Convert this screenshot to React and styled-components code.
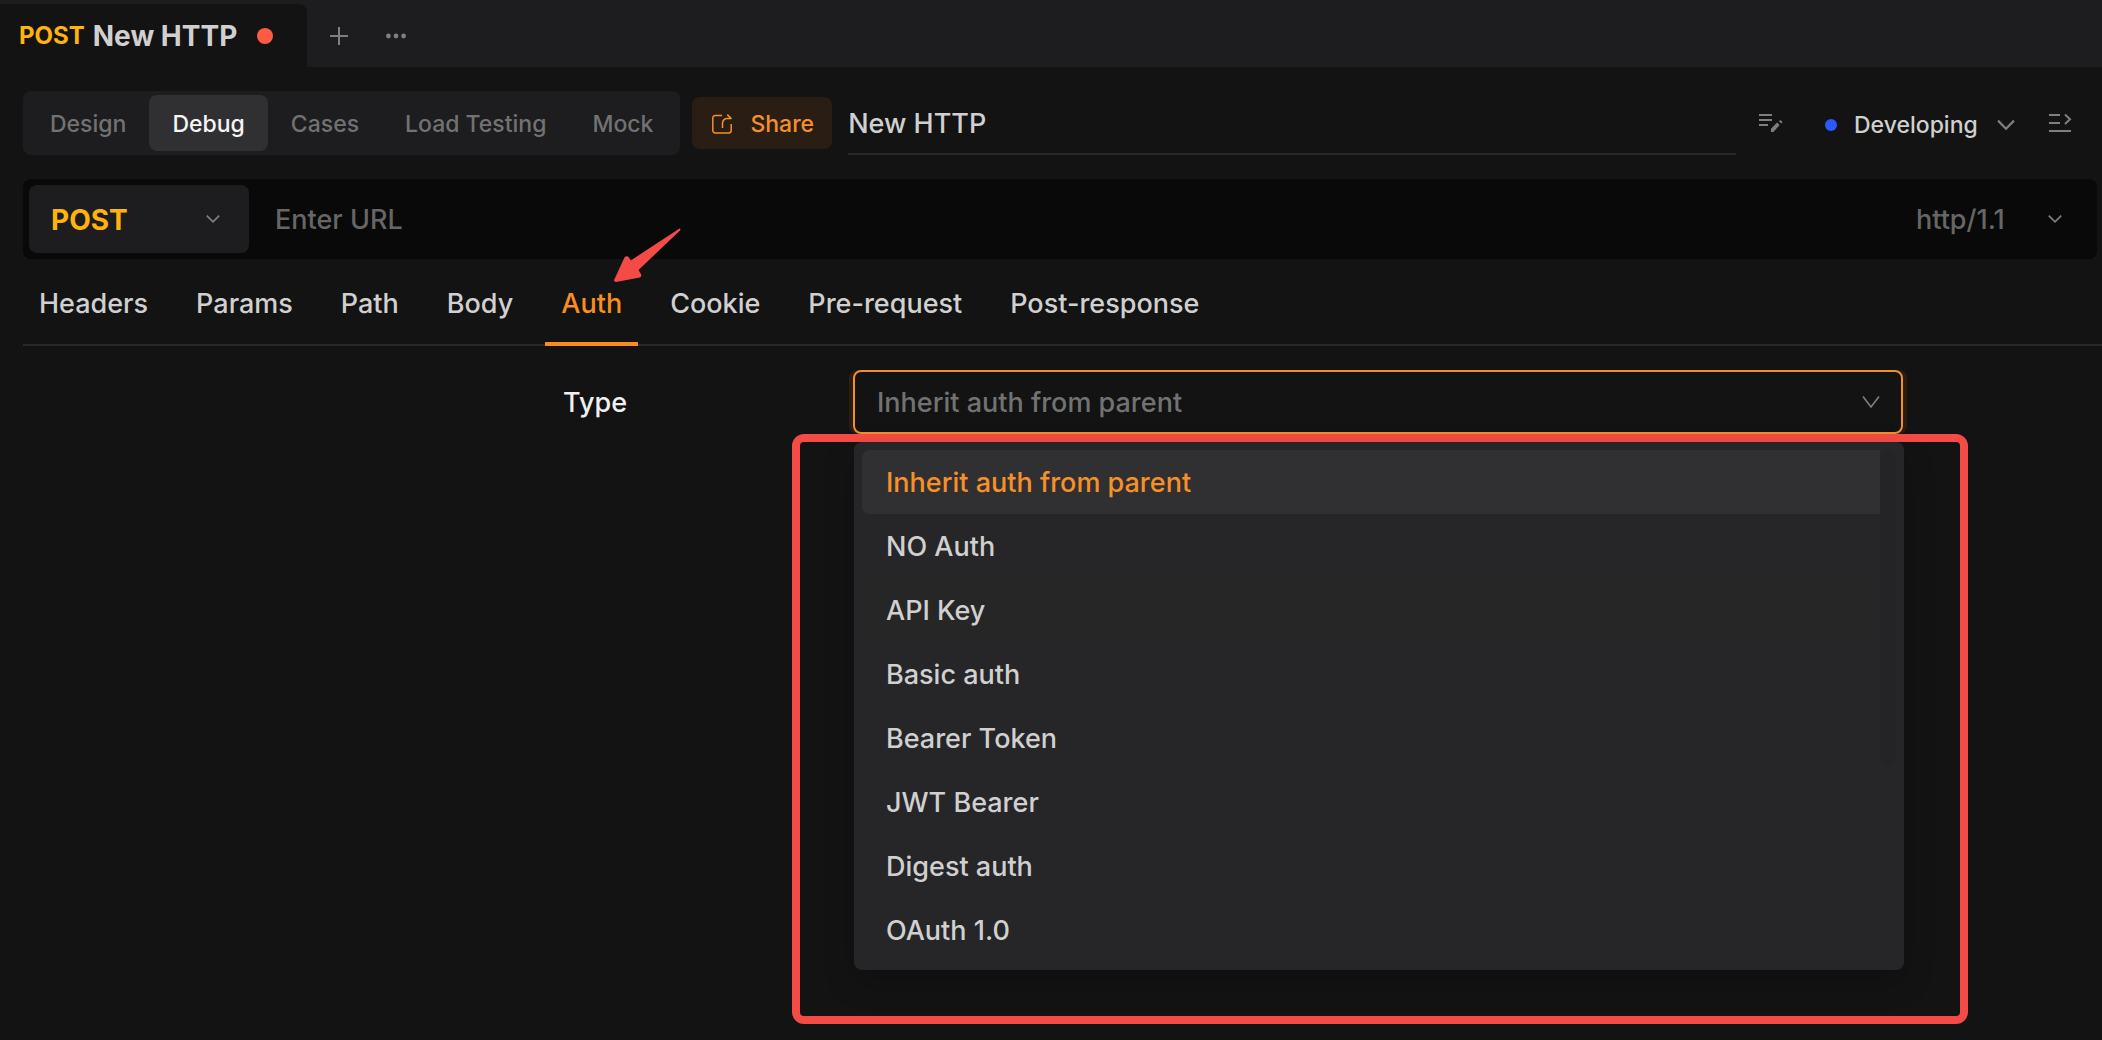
import React, { useState } from "react";
import styled, { createGlobalStyle, css } from "styled-components";

const MODES = ["Design", "Debug", "Cases", "Load Testing", "Mock"];
const REQUEST_TABS = [
  "Headers",
  "Params",
  "Path",
  "Body",
  "Auth",
  "Cookie",
  "Pre-request",
  "Post-response",
];
const AUTH_TYPES = [
  "Inherit auth from parent",
  "NO Auth",
  "API Key",
  "Basic auth",
  "Bearer Token",
  "JWT Bearer",
  "Digest auth",
  "OAuth 1.0",
];

const PlusIcon = () => (
  <svg width="18" height="18" viewBox="0 0 18 18" fill="none" stroke="currentColor" strokeWidth="2">
    <path d="M9 0v18M0 9h18" />
  </svg>
);

const MoreIcon = () => (
  <svg width="20" height="18" viewBox="0 0 20 18" fill="currentColor">
    <circle cx="2.4" cy="9" r="2.4" />
    <circle cx="10" cy="9" r="2.4" />
    <circle cx="17.6" cy="9" r="2.4" />
  </svg>
);

const ShareIcon = () => (
  <svg width="20" height="20" viewBox="0 0 20 20" fill="none" stroke="currentColor" strokeWidth="1.5">
    <path d="M10 1.500H3.200A2.400 2.400 0 0 0 .8 3.900v12.600A2.400 2.400 0 0 0 3.200 18.900h13.600A2.400 2.400 0 0 0 19.200 16.500V10" />
    <path d="M10.500 14V9.500C10.500 6.300 12.300 4.600 15.500 4.600H19.400" />
    <path d="M15.300 .6l4 4" />
  </svg>
);

const ChevronIcon = ({ size = 14 }) => (
  <svg width={size} height={size} viewBox="0 0 14 14" fill="none" stroke="currentColor" strokeWidth="1.7">
    <path d="M.8 3.600L7 9.900l6.200-6.300" />
  </svg>
);

const DownIcon = () => (
  <svg width="18" height="14" viewBox="0 0 18 14" fill="none" stroke="currentColor" strokeWidth="1.6">
    <path d="M1 1.500l8 10.500 8-10.500" />
  </svg>
);

const EditIcon = () => (
  <svg width="24" height="20" viewBox="0 0 24 20" fill="none" stroke="currentColor" strokeWidth="2">
    <path d="M0 2h13M0 7h13M0 12h9" />
    <path d="M12 19v-3.200L18.200 9.600l2.400 2.400L14.400 19zM20 8.200l1.200-1.200 2.400 2-1.400 1.600z" fill="currentColor" stroke="none" />
  </svg>
);

const CollapseIcon = () => (
  <svg width="24" height="20" viewBox="0 0 24 20" fill="none" stroke="currentColor" strokeWidth="2">
    <path d="M1 2h11M1 10h11M1 18h22" />
    <path d="M17 1.500l5 4.700-5 4.700" />
  </svg>
);

const ArrowMark = () => (
  <Arrow width="74" height="60" viewBox="0 0 74 60">
    <path d="M69.500 3.500Q71 3.800 70 5.600L28.500 45l2.600 4.200q.7 3-1.300 3.400L6 57Q3.600 56.800 4.200 54.800L14.600 32.200Q17 30 19 32.600L20.800 35.400z" />
  </Arrow>
);

const SelectBox = ({ label, value, options, onChange, children, ...rest }) => (
  <SelectWrap {...rest}>
    <NativeSelect
      aria-label={label}
      value={value}
      onChange={(e) => onChange(e.target.value)}
    >
      {options.map((item) => (
        <option key={item}>{item}</option>
      ))}
    </NativeSelect>
    {children}
  </SelectWrap>
);

const AuthSelect = () => {
  const [value, setValue] = useState(AUTH_TYPES[0]);
  const [open, setOpen] = useState(true);
  const [hovered, setHovered] = useState("API Key");

  const toggleMenu = (e) => {
    e.preventDefault();
    setOpen(!open);
  };
  const pick = (item) => {
    setValue(item);
    setOpen(false);
  };

  return (
    <Field>
      <FieldBox>
        <NativeSelect
          id="auth-type"
          value={value}
          onMouseDown={toggleMenu}
          onChange={(e) => setValue(e.target.value)}
        >
          {AUTH_TYPES.map((item) => (
            <option key={item}>{item}</option>
          ))}
        </NativeSelect>
        <DownIcon />
      </FieldBox>
      {open && (
        <MenuFrame>
          <Menu>
            <OptionList>
              {AUTH_TYPES.map((item) => (
                <li key={item}>
                  <Option
                    type="button"
                    $selected={item === value}
                    $hovered={item === hovered}
                    onMouseEnter={() => setHovered(item)}
                    onClick={() => pick(item)}
                  >
                    {item}
                  </Option>
                </li>
              ))}
            </OptionList>
            <ScrollTrack>
              <ScrollThumb />
            </ScrollTrack>
          </Menu>
        </MenuFrame>
      )}
    </Field>
  );
};

export default function App() {
  const [mode, setMode] = useState("Debug");
  const [tab, setTab] = useState("Auth");
  const [name, setName] = useState("New HTTP");
  const [url, setUrl] = useState("");
  const [method, setMethod] = useState("POST");
  const [protocol, setProtocol] = useState("http/1.1");
  const [status, setStatus] = useState("Developing");

  return (
    <Page>
      <GlobalStyle />
      <TabBar>
        <FileTab type="button">
          <Method>POST</Method>
          <span>New HTTP</span>
          <UnsavedDot />
        </FileTab>
        <IconButton type="button" aria-label="New tab">
          <PlusIcon />
        </IconButton>
        <IconButton type="button" aria-label="More">
          <MoreIcon />
        </IconButton>
      </TabBar>

      <Toolbar>
        <Modes>
          {MODES.map((item) => (
            <ModeButton
              key={item}
              type="button"
              $active={item === mode}
              onClick={() => setMode(item)}
            >
              {item}
            </ModeButton>
          ))}
        </Modes>
        <ShareButton type="button">
          <ShareIcon />
          Share
        </ShareButton>
        <NameInput
          aria-label="Request name"
          value={name}
          onChange={(e) => setName(e.target.value)}
        />
        <Tools>
          <IconButton type="button" aria-label="Edit description">
            <EditIcon />
          </IconButton>
          <Status>
            <StatusDot />
            <StatusSelect
              label="Status"
              value={status}
              options={["Developing", "Testing", "Released"]}
              onChange={setStatus}
            >
              <ChevronIcon size={18} />
            </StatusSelect>
          </Status>
          <IconButton type="button" aria-label="Toggle side panel">
            <CollapseIcon />
          </IconButton>
        </Tools>
      </Toolbar>

      <UrlBar>
        <MethodSelect
          label="Method"
          value={method}
          options={["GET", "POST", "PUT", "DELETE"]}
          onChange={setMethod}
        >
          <ChevronIcon />
        </MethodSelect>
        <UrlInput
          aria-label="URL"
          placeholder="Enter URL"
          value={url}
          onChange={(e) => setUrl(e.target.value)}
        />
        <ProtocolSelect
          label="Protocol"
          value={protocol}
          options={["http/1.1", "http/2"]}
          onChange={setProtocol}
        >
          <ChevronIcon />
        </ProtocolSelect>
      </UrlBar>

      <RequestTabs>
        {REQUEST_TABS.map((item) => (
          <RequestTab
            key={item}
            type="button"
            $active={item === tab}
            onClick={() => setTab(item)}
          >
            {item}
            {item === "Auth" && <ArrowMark />}
          </RequestTab>
        ))}
      </RequestTabs>

      <AuthForm>
        <TypeLabel htmlFor="auth-type">Type</TypeLabel>
        <AuthSelect />
      </AuthForm>
    </Page>
  );
}

const GlobalStyle = createGlobalStyle`
  * {
    box-sizing: border-box;
  }
  body {
    margin: 0;
    background-color: #131313;
  }
  button, input, select {
    margin: 0;
    padding: 0;
    border: 0;
    background: none;
    color: inherit;
    font: inherit;
    outline: none;
  }
  button, select {
    cursor: pointer;
  }
  svg {
    display: block;
    flex-shrink: 0;
  }
`;

const Page = styled.div`
  min-height: 100vh;
  background-color: #131313;
  color: #d0d0d0;
  font-family: Inter, "Liberation Sans", sans-serif;
  font-size: 27px;
  font-weight: 500;
  line-height: 36px;
`;

const TabBar = styled.div`
  display: flex;
  align-items: center;
  gap: 38px;
  height: 67px;
  padding-top: 4px;
  background-color: #1d1d1f;
`;
const FileTab = styled.button`
  display: flex;
  align-items: center;
  gap: 8px;
  height: 63px;
  margin-right: -15px;
  padding: 0 34px 0 19px;
  border-radius: 0 8px 0 0;
  background-color: #131313;
  font-size: 28px;
  font-weight: 700;
`;
const Method = styled.span`
  color: #ffb30f;
  font-size: 24px;
`;
const UnsavedDot = styled.i`
  width: 16px;
  height: 16px;
  margin-left: 12px;
  border-radius: 50%;
  background-color: #ff5b42;
`;
const IconButton = styled.button`
  color: #7f7f7f;
`;

const Toolbar = styled.div`
  display: flex;
  align-items: center;
  gap: 12px;
  padding: 24px 30px 24px 23px;
`;
const Modes = styled.div`
  display: flex;
  padding: 4px;
  border-radius: 8px;
  background-color: #1d1d1f;
`;
const ModeButton = styled.button`
  height: 56px;
  padding: 2px 23px 0;
  border-radius: 8px;
  font-size: 23px;
  color: #727272;
  ${({ $active }) =>
    $active &&
    css`
      background-color: #303032;
      color: #f5f5f5;
    `}
`;
const ShareButton = styled.button`
  display: flex;
  align-items: center;
  gap: 18px;
  height: 52px;
  padding: 2px 18px 0 20px;
  border-radius: 8px;
  background-color: #2a1e14;
  color: #f5902a;
  font-size: 23px;
`;
const NameInput = styled.input`
  flex: 1;
  min-width: 0;
  height: 64px;
  margin-left: 4px;
  padding-top: 2px;
  border-bottom: 2px solid #29292a;
`;
const Tools = styled.div`
  display: flex;
  align-items: center;
  gap: 32px;
  padding-left: 11px;
`;
const Status = styled.div`
  display: flex;
  align-items: center;
  gap: 17px;
  padding: 4px 1px 0 10px;
  font-size: 23px;
`;
const StatusDot = styled.i`
  width: 12px;
  height: 12px;
  border-radius: 50%;
  background-color: #2b59ff;
`;

/* the arrow shares the cell of the select and lets clicks through */
const SelectWrap = styled.div`
  display: grid;
  align-items: center;
  > * {
    grid-area: 1 / 1;
  }
  > svg {
    justify-self: end;
    color: #7f7f7f;
    pointer-events: none;
  }
`;
const NativeSelect = styled.select`
  width: 100%;
  height: 100%;
  appearance: none;
  option {
    background-color: #262628;
    color: #d0d0d0;
  }
`;
const StatusSelect = styled(SelectBox)`
  select {
    padding-right: 37px;
  }
`;

const UrlBar = styled.div`
  display: flex;
  height: 80px;
  margin: 0 5px 0 23px;
  padding: 6px;
  border-radius: 8px;
  background-color: #090909;
`;
const MethodSelect = styled(SelectBox)`
  width: 220px;
  border-radius: 8px;
  background-color: #1d1d1f;
  color: #ffb30f;
  font-size: 28px;
  font-weight: 700;
  select {
    padding: 2px 0 0 22px;
  }
  > svg {
    margin-right: 29px;
  }
`;
const UrlInput = styled.input`
  flex: 1;
  min-width: 0;
  padding: 2px 26px 0;
  &::placeholder {
    color: #666;
    opacity: 1;
  }
`;
const ProtocolSelect = styled(SelectBox)`
  color: #666;
  select {
    padding: 2px 86px 0 0;
  }
  > svg {
    margin-right: 29px;
  }
`;

const RequestTabs = styled.div`
  display: flex;
  gap: 16px;
  height: 87px;
  margin-left: 23px;
  border-bottom: 2px solid #29292a;
`;
const RequestTab = styled.button`
  position: relative;
  height: 87px;
  padding: 6px 16px 0;
  border-bottom: 4px solid transparent;
  ${({ $active }) =>
    $active &&
    css`
      border-color: #fa8e1d;
      color: #fa8e1d;
    `}
`;
const Arrow = styled.svg`
  position: absolute;
  top: -34px;
  left: 65px;
  fill: #f54b46;
  pointer-events: none;
`;

const AuthForm = styled.div`
  display: grid;
  grid-template-columns: 540fr 290fr 1050fr 199fr;
  align-items: center;
  margin-left: 23px;
  padding: 24px 0;
`;
const TypeLabel = styled.label`
  grid-column: 2;
  padding-top: 2px;
  color: #f0f0f0;
`;
const Field = styled.div`
  position: relative;
  grid-column: 3;
`;
const FieldBox = styled(SelectWrap)`
  height: 64px;
  border: 2px solid #f0902c;
  border-radius: 8px;
  box-shadow: -4px 0 0 #2a1d10, 4px 0 0 #2a1d10;
  color: #727272;
  select {
    padding: 2px 0 0 22px;
  }
  > svg {
    margin-right: 21px;
  }
`;
const MenuFrame = styled.div`
  position: absolute;
  top: 100%;
  left: -61px;
  right: -65px;
  padding: 0 56px 46px 54px;
  border: 8px solid #f54b46;
  border-radius: 12px;
`;
const Menu = styled.div`
  display: flex;
  padding: 8px;
  border-radius: 8px;
  background-color: #262628;
  box-shadow: 0 12px 32px rgba(0, 0, 0, 0.2);
`;
const OptionList = styled.ul`
  flex: 1;
  margin: 0;
  padding: 0;
  list-style: none;
`;
const Option = styled.button`
  display: block;
  width: 100%;
  height: 64px;
  padding: 2px 24px 0;
  border-radius: 8px 0 0 8px;
  text-align: left;
  background-color: ${({ $selected, $hovered }) =>
    $selected ? "#303032" : $hovered ? "#262626" : "transparent"};
  color: ${({ $selected }) => ($selected ? "#f5902a" : "#d0d0d0")};
`;
const ScrollTrack = styled.div`
  width: 16px;
`;
const ScrollThumb = styled.div`
  height: 314px;
  border-radius: 8px;
  background-color: #242426;
`;
